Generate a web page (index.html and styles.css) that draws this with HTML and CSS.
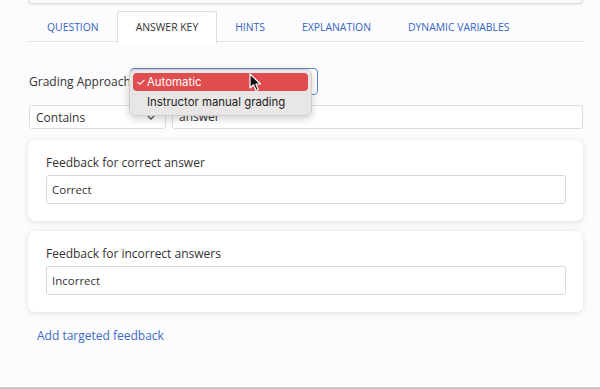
FILE: index.html
```html
<!DOCTYPE html>
<html lang="en">
<head>
    <meta charset="UTF-8">
    <meta name="viewport" content="width=device-width, initial-scale=1.0">
    <title>Answer Key</title>
    <link rel="stylesheet" href="styles.css">
</head>
<body>
    <div class="page">
        <div class="top-card"></div>

        <ul class="tabs">
            <li class="tab">Question</li>
            <li class="tab active">Answer Key</li>
            <li class="tab">Hints</li>
            <li class="tab">Explanation</li>
            <li class="tab">Dynamic Variables</li>
        </ul>

        <div class="grading-row">
            <label class="grading-label">Grading Approach</label>
            <div class="select-wrap">
                <div class="grading-select"></div>
                <div class="menu">
                    <div class="menu-item selected"><span class="check">&#10003;</span>Automatic</div>
                    <div class="menu-item">Instructor manual grading</div>
                </div>
                <svg class="cursor" width="14" height="20" viewBox="0 0 14 20">
                    <path d="M1 1 L1 15 L4.5 11.8 L7 17.5 L9.3 16.5 L6.9 11 L11.5 11 Z" fill="#111" stroke="#fff" stroke-width="1.2" stroke-linejoin="round"/>
                </svg>
            </div>
        </div>

        <div class="match-row">
            <div class="match-select">
                <span>Contains</span>
                <svg width="12" height="8" viewBox="0 0 12 8">
                    <path d="M1.5 1.5 L6 6 L10.5 1.5" fill="none" stroke="#555" stroke-width="1.3"/>
                </svg>
            </div>
            <div class="match-input">answer</div>
        </div>

        <div class="card">
            <div class="card-label">Feedback for correct answer</div>
            <div class="text-input">Correct</div>
        </div>

        <div class="card">
            <div class="card-label">Feedback for incorrect answers</div>
            <div class="text-input">Incorrect</div>
        </div>

        <a class="add-link" href="#">Add targeted feedback</a>
    </div>
    <div class="bottom-line"></div>
</body>
</html>
```

FILE: styles.css
```css
body {
    margin: 0;
    background-color: #fcfbfe;
    font-family: "Open Sans", Arial, sans-serif;
    color: #333;
    height: 389px;
    display: flex;
    flex-direction: column;
    overflow: hidden;
}
.page {
    flex: 1;
    padding: 0 17px 0 28px;
}
.top-card {
    height: 3px;
    background: #fafafa;
    border: 1px solid #ddd;
    border-top: none;
    border-radius: 0 0 6px 6px;
    box-shadow: 0 1px 3px rgba(0, 0, 0, 0.08);
}
.tabs {
    list-style: none;
    margin: 7px 0 0 0;
    padding: 0;
    display: flex;
    border-bottom: 1px solid #e2e2e4;
    height: 30px;
}
.tab {
    padding: 0 17.5px;
    font-size: 10.4px;
    text-transform: uppercase;
    color: #3566c2;
    line-height: 30px;
    border: 1px solid transparent;
    border-bottom: none;
    border-radius: 3px 3px 0 0;
}
.tab:first-child {
    padding-left: 18px;
}
.tab.active {
    color: #333;
    background: #fff;
    border-color: #dedede;
    height: 31px;
}
.grading-row {
    display: flex;
    align-items: center;
    margin-top: 25px;
    height: 28px;
}
.grading-label {
    font-size: 12px;
    width: 101px;
    margin-left: 1px;
    white-space: nowrap;
}
.select-wrap {
    position: relative;
}
.grading-select {
    width: 186px;
    height: 25px;
    border: 1.5px solid #5b86d2;
    border-radius: 4px;
    background: #fff;
}
.menu {
    position: absolute;
    left: -1px;
    top: 1px;
    width: 175px;
    padding: 3px 3px;
    background: rgba(232, 229, 229, 0.97);
    border: 1px solid #cfcccc;
    border-radius: 6px;
    box-shadow: 0 3px 8px rgba(0, 0, 0, 0.18);
    font-family: Inter, "Liberation Sans", sans-serif;
    font-size: 11.4px;
    z-index: 2;
}
.menu-item {
    height: 18px;
    line-height: 17px;
    padding-left: 14px;
    color: #222;
}
.menu-item.selected {
    background: #e04d50;
    color: #fff;
    border-radius: 4px;
    padding-left: 3px;
    margin-bottom: 3px;
    line-height: 18px;
}
.check {
    display: inline-block;
    width: 11px;
    font-size: 11px;
}
.cursor {
    position: absolute;
    left: 119px;
    top: 5px;
    z-index: 3;
}
.match-row {
    display: flex;
    gap: 6px;
    margin-top: 10px;
}
.match-select {
    width: 121px;
    height: 22px;
    padding: 0 8px 0 6px;
    border: 1px solid #ddd;
    border-radius: 3px;
    background: #fff;
    display: flex;
    align-items: center;
    justify-content: space-between;
    font-size: 12px;
    margin-left: 1px;
}
.match-input {
    flex: 1;
    height: 22px;
    line-height: 22px;
    padding: 0 6px;
    border: 1px solid #ddd;
    border-radius: 3px;
    background: #fff;
    font-size: 12px;
}
.card {
    background: #fff;
    border-radius: 7px;
    box-shadow: 0 1px 6px rgba(0, 0, 0, 0.12);
    padding: 15px 17px 17px 18px;
    margin-top: 11px;
}
.card + .card {
    margin-top: 10px;
}
.card-label {
    font-size: 12px;
    line-height: 16px;
    margin-bottom: 4px;
}
.text-input {
    height: 27px;
    line-height: 27px;
    padding: 0 5px;
    border: 1px solid #d8d8d8;
    border-radius: 3px;
    font-size: 11.5px;
}
.add-link {
    display: inline-block;
    margin: 15px 0 0 9px;
    font-size: 12px;
    color: #3b6cc5;
    text-decoration: none;
}
.bottom-line {
    height: 2px;
    background: #c8c8c8;
}
```
